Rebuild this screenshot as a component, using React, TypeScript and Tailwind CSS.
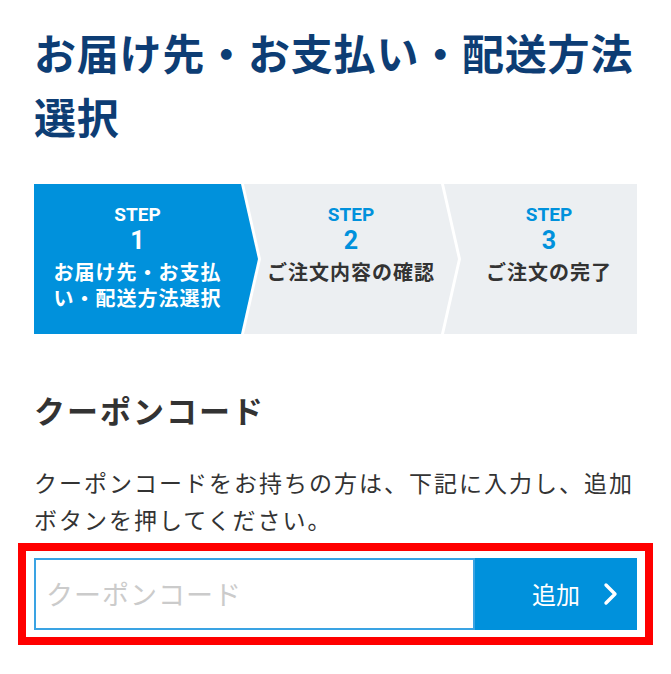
const steps = [
  {
    no: '1',
    label: 'お届け先・お支払い・配送方法選択',
    active: true,
    shape: 'w-[224px] pr-[17px] [clip-path:polygon(0_0,207px_0,100%_50%,207px_100%,0_100%)]',
  },
  {
    no: '2',
    label: 'ご注文内容の確認',
    active: false,
    shape: 'w-[214px] -ml-[14px] px-[17px] [clip-path:polygon(0_0,197px_0,100%_50%,197px_100%,0_100%,17px_50%)]',
  },
  {
    no: '3',
    label: 'ご注文の完了',
    active: false,
    shape: 'flex-1 -ml-[14px] pl-[17px] [clip-path:polygon(0_0,100%_0,100%_100%,0_100%,17px_50%)]',
  },
];

function StepBar() {
  return (
    <ol className="mt-[36px] flex h-[150px]">
      {steps.map((s) => (
        <li
          key={s.no}
          className={`${s.shape} ${s.active ? 'bg-[#0091dc] text-white' : 'bg-[#eceff2] text-[#333]'}`}
        >
          <div className="flex flex-col items-center pt-[20px] text-center">
            <span
              className={`font-['Roboto','Noto_Sans_CJK_JP',sans-serif] text-[19px] font-bold leading-[22px] ${s.active ? 'text-white' : 'text-[#0091dc]'}`}
            >
              STEP
            </span>
            <span
              className={`mt-[1px] font-['Roboto','Noto_Sans_CJK_JP',sans-serif] text-[25px] font-bold leading-[28px] ${s.active ? 'text-white' : 'text-[#0091dc]'}`}
            >
              {s.no}
            </span>
            <span className="mt-[4px] max-w-[178px] text-[20px] font-bold leading-[26px] tracking-[1px]">{s.label}</span>
          </div>
        </li>
      ))}
    </ol>
  );
}

export default function App() {
  return (
    <div className="min-h-screen bg-white font-['Noto_Sans_CJK_JP',sans-serif] text-[#333]">
      <div className="px-[34px] pt-[20px] pb-[30px]">
        <h1 className="text-[42px] font-bold leading-[64px] tracking-[0.8px] text-[#0d3d74]">
          お届け先・お支払い・配送方法選択
        </h1>

        <StepBar />

        <h2 className="mt-[54px] text-[31px] font-bold leading-[44px] tracking-[2px] text-[#333]">クーポンコード</h2>

        <p className="mt-[32px] text-[23px] font-normal leading-[37px] tracking-[2px] text-[#333]">
          クーポンコードをお持ちの方は、下記に入力し、追加ボタンを押してください。
        </p>

        <div className="-mx-[16px] mt-[5px] border-[8px] border-[#ff0000] px-[8px] py-[7px]">
          <div className="flex h-[72px]">
            <input
              type="text"
              placeholder="クーポンコード"
              className="min-w-0 flex-1 border-2 border-[#3aa3e3] bg-white pl-[10px] text-[27px] tracking-[1px] text-[#333] outline-none placeholder:text-[#cbcbcb]"
            />
            <button
              type="button"
              className="flex w-[162px] items-center justify-end gap-[22px] bg-[#0091dc] pr-[17px] text-[24px] text-white"
            >
              <span>追加</span>
              <svg width="18" height="24" viewBox="0 0 18 24" fill="none">
                <polyline points="4,3 13,12 4,21" stroke="white" strokeWidth="3.4" strokeLinecap="round" strokeLinejoin="round" />
              </svg>
            </button>
          </div>
        </div>
      </div>
    </div>
  );
}
